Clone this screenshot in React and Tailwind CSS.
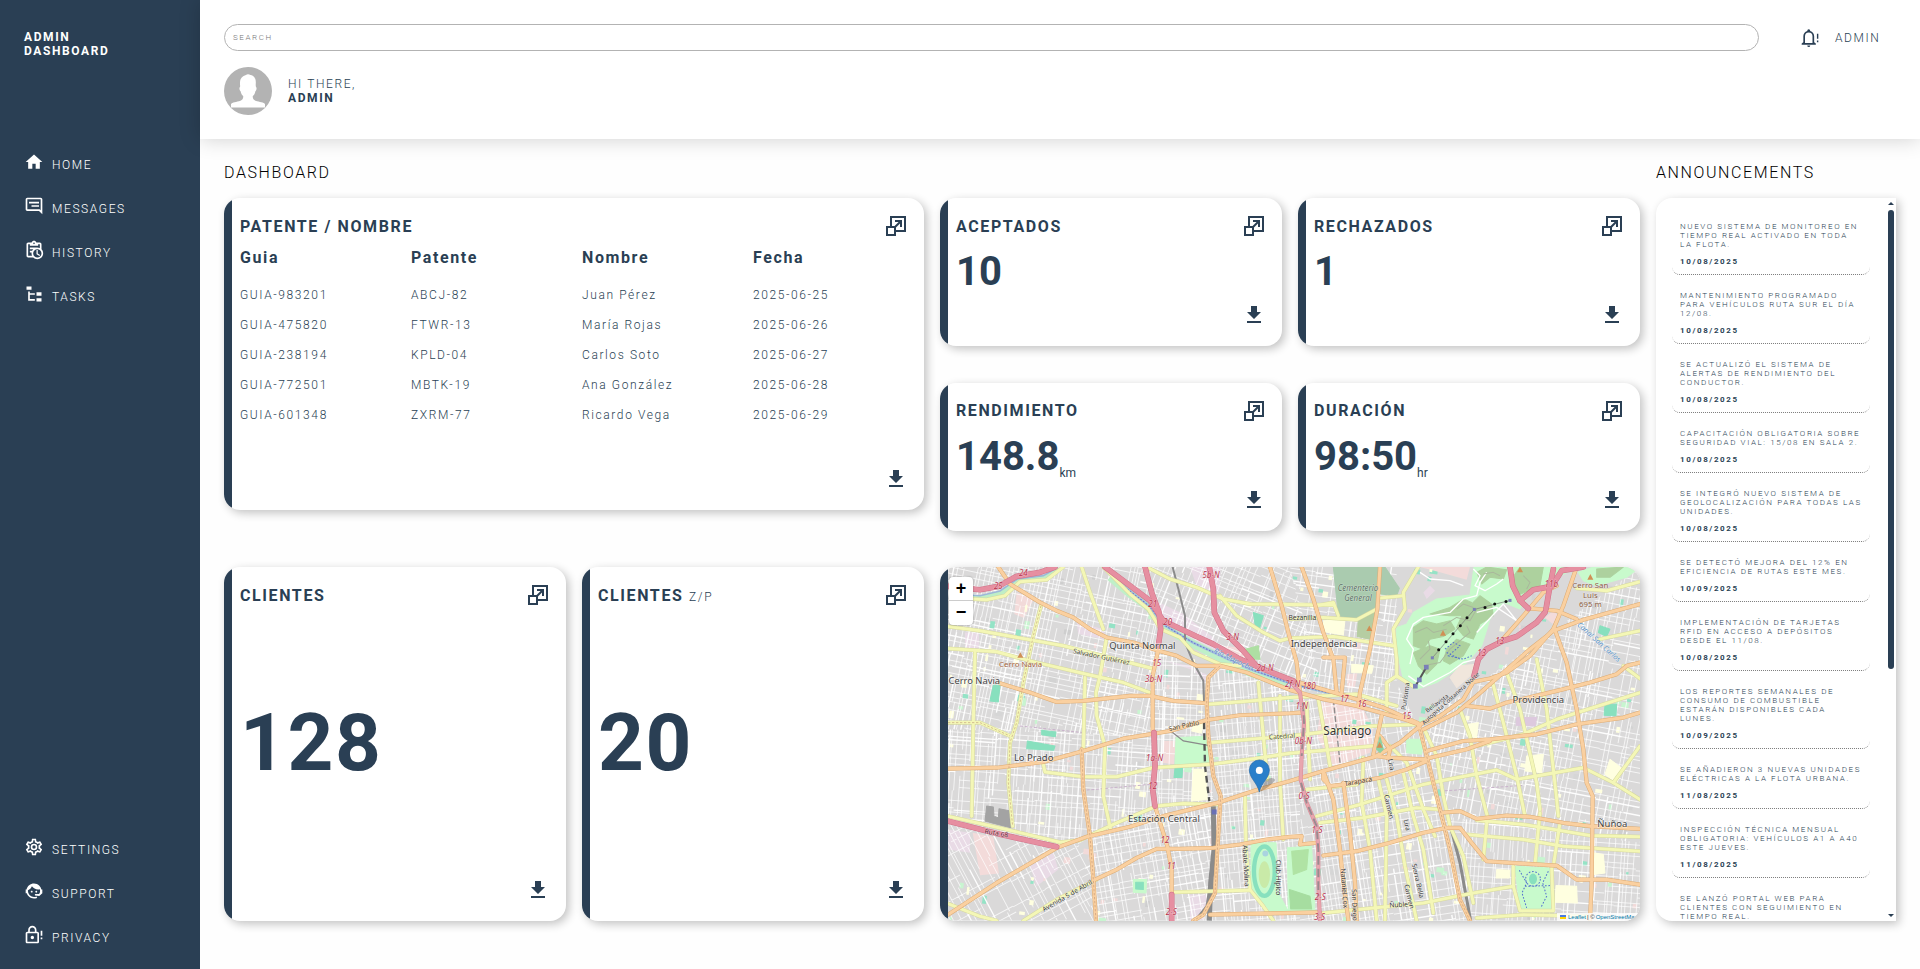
import React from "react";

const P = {
  home: "M10,20V14H14V20H19V12H22L12,3L2,12H5V20H10Z",
  messages:
    "M9 11H18V13H9V11M18 7H6V9H18V7M22 4V22L18 18H4C2.9 18 2 17.11 2 16V4C2 2.9 2.9 2 4 2H20C21.1 2 22 2.9 22 4M20 4H4V16H18.83L20 17.17V4Z",
  history:
    "M21 11.11V5C21 3.9 20.11 3 19 3H14.82C14.4 1.84 13.3 1 12 1S9.6 1.84 9.18 3H5C3.9 3 3 3.9 3 5V19C3 20.11 3.9 21 5 21H11.11C12.37 22.24 14.09 23 16 23C19.87 23 23 19.87 23 16C23 14.09 22.24 12.37 21 11.11M12 3C12.55 3 13 3.45 13 4S12.55 5 12 5 11 4.55 11 4 11.45 3 12 3M5 19V5H7V7H17V5H19V9.68C18.09 9.25 17.08 9 16 9H7V11H11.1C10.5 11.57 10.04 12.25 9.68 13H7V15H9.08C9.03 15.33 9 15.66 9 16C9 17.08 9.25 18.09 9.68 19H5M16 21C13.24 21 11 18.76 11 16S13.24 11 16 11 21 13.24 21 16 18.76 21 16 21M16.5 16.25L19.36 17.94L18.61 19.16L15 17V12H16.5V16.25Z",
  tasks: "M3,3H9V7H3V3M15,10H21V14H15V10M15,17H21V21H15V17M13,13H7V18H13V20H7L5,20V9H7V11H13V13Z",
  settings:
    "M12,8A4,4 0 0,1 16,12A4,4 0 0,1 12,16A4,4 0 0,1 8,12A4,4 0 0,1 12,8M12,10A2,2 0 0,0 10,12A2,2 0 0,0 12,14A2,2 0 0,0 14,12A2,2 0 0,0 12,10M10,22C9.75,22 9.54,21.82 9.5,21.58L9.13,18.93C8.5,18.68 7.96,18.34 7.44,17.94L4.95,18.95C4.73,19.03 4.46,18.95 4.34,18.73L2.34,15.27C2.21,15.05 2.27,14.78 2.46,14.63L4.57,12.97L4.5,12L4.57,11L2.46,9.37C2.27,9.22 2.21,8.95 2.34,8.73L4.34,5.27C4.46,5.05 4.73,4.96 4.95,5.05L7.44,6.05C7.96,5.66 8.5,5.32 9.13,5.07L9.5,2.42C9.54,2.18 9.75,2 10,2H14C14.25,2 14.46,2.18 14.5,2.42L14.87,5.07C15.5,5.32 16.04,5.66 16.56,6.05L19.05,5.05C19.27,4.96 19.54,5.05 19.66,5.27L21.66,8.73C21.79,8.95 21.73,9.22 21.54,9.37L19.43,11L19.5,12L19.43,13L21.54,14.63C21.73,14.78 21.79,15.05 21.66,15.27L19.66,18.73C19.54,18.95 19.27,19.04 19.05,18.95L16.56,17.95C16.04,18.34 15.5,18.68 14.87,18.93L14.5,21.58C14.46,21.82 14.25,22 14,22H10M11.25,4L10.88,6.61C9.68,6.86 8.62,7.5 7.85,8.39L5.44,7.35L4.69,8.65L6.8,10.2C6.4,11.37 6.4,12.64 6.8,13.8L4.68,15.36L5.43,16.66L7.86,15.62C8.63,16.5 9.68,17.14 10.87,17.38L11.24,20H12.76L13.13,17.39C14.32,17.14 15.37,16.5 16.14,15.62L18.57,16.66L19.32,15.36L17.2,13.81C17.6,12.64 17.6,11.37 17.2,10.2L19.31,8.65L18.56,7.35L16.15,8.39C15.38,7.5 14.32,6.86 13.12,6.62L12.75,4H11.25Z",
  support:
    "M18.72,14.76C19.07,13.91 19.26,13 19.26,12C19.26,11.28 19.15,10.59 18.96,9.95C18.31,10.1 17.63,10.18 16.92,10.18C13.86,10.18 11.15,8.67 9.5,6.34C8.61,8.5 6.91,10.26 4.77,11.22C4.73,11.47 4.73,11.74 4.73,12A7.27,7.27 0 0,0 12,19.27C13.05,19.27 14.06,19.04 14.97,18.63C15.54,19.72 15.8,20.26 15.78,20.26C14.14,20.81 12.87,21.08 12,21.08C9.58,21.08 7.27,20.13 5.57,18.42C4.53,17.38 3.76,16.11 3.33,14.73H2V10.18H3.09C3.93,6.04 7.6,2.92 12,2.92C14.4,2.92 16.71,3.87 18.42,5.58C19.69,6.84 20.54,8.45 20.89,10.18H22V14.73H21.94L18.38,18L13.08,17.4V15.73H17.91L18.72,14.76M9.27,11.77C9.9,11.77 10.4,12.28 10.4,12.91C10.4,13.54 9.9,14.04 9.27,14.04C8.64,14.04 8.13,13.54 8.13,12.91C8.13,12.28 8.64,11.77 9.27,11.77M14.72,11.77C15.35,11.77 15.85,12.28 15.85,12.91C15.85,13.54 15.35,14.04 14.72,14.04C14.09,14.04 13.58,13.54 13.58,12.91A1.14,1.14 0 0,1 14.72,11.77Z",
  privacy:
    "M10 17C8.89 17 8 16.1 8 15C8 13.89 8.89 13 10 13C11.11 13 12 13.89 12 15C12 16.11 11.11 17 10 17M16 20V10H4V20H16M16 8C17.11 8 18 8.89 18 10V20C18 21.11 17.11 22 16 22H4C2.89 22 2 21.1 2 20V10C2 8.89 2.89 8 4 8H5V6C5 3.24 7.24 1 10 1C12.76 1 15 3.24 15 6V8H16M10 3C8.34 3 7 4.34 7 6V8H13V6C13 4.34 11.66 3 10 3M22 13H20V7H22V13M22 17H20V15H22V17Z",
  bell: "M22,7V13H20.3V7H22M22,15V17H20.3V15H22M10.5,1.6A1.8,1.8 0 0,0 8.7,3.5C5.9,4.3 4,7 4,10V17L2,18.6V20H19V18.6L17,17V10C17,7 15.1,4.3 12.3,3.5A1.8,1.8 0 0,0 10.5,1.6M10.5,5.4A4.6,4.6 0 0,1 15,10V18H6V10A4.6,4.6 0 0,1 10.5,5.4M8.7,21A1.8,1.8 0 0,0 12.3,21H8.7Z",
  expand:
    "M10.59,12L14.59,8H11V6H18V13H16V9.41L12,13.41V16H20V4H8V12H10.59M22,2V18H12V22H2V12H6V2H22M10,14H4V20H10V14Z",
  download: "M5,20H19V18H5M19,9H15V3H9V9H5L12,16L19,9Z",
};

function Icon({ name, className = "size-6" }) {
  return (
    <svg viewBox="0 0 24 24" fill="currentColor" className={`block shrink-0 ${className}`}>
      <path d={P[name]} />
    </svg>
  );
}

function NavItem({ icon, children }) {
  return (
    <a className="flex h-5 items-center gap-2 text-xs font-light text-white">
      <Icon name={icon} className="size-5" />
      <span className="mt-[5px] leading-[14px]">{children}</span>
    </a>
  );
}

function Card({ title, note, className, children, center }) {
  return (
    <section className={`flex overflow-hidden rounded-2xl bg-white shadow-[3px_3px_10px_rgba(0,0,0,0.24)] ${className}`}>
      <div className="w-2 shrink-0 bg-[#2a3f54]" />
      <div className="flex min-w-0 grow flex-col pt-4 pr-4 pb-[19px] pl-2">
        <header className="flex h-6 items-center justify-between">
          <h3 className="text-base leading-[19px] font-bold">
            {title}
            {note && " "}
            {note && <span className="text-xs font-light">{note}</span>}
          </h3>
          <Icon name="expand" />
        </header>
        <div className={`flex grow flex-col ${center ? "justify-center" : ""}`}>{children}</div>
        <div className="flex justify-end">
          <Icon name="download" />
        </div>
      </div>
    </section>
  );
}

function Stat({ value, unit }) {
  return (
    <p className="mt-2.5 h-[47px] text-[40px] leading-[47px] font-bold tracking-normal">
      {value}
      {unit && <span className="relative top-[7px] text-xs font-normal">{unit}</span>}
    </p>
  );
}

const rows = [
  ["GUIA-983201", "ABCJ-82", "Juan Pérez", "2025-06-25"],
  ["GUIA-475820", "FTWR-13", "María Rojas", "2025-06-26"],
  ["GUIA-238194", "KPLD-04", "Carlos Soto", "2025-06-27"],
  ["GUIA-772501", "MBTK-19", "Ana González", "2025-06-28"],
  ["GUIA-601348", "ZXRM-77", "Ricardo Vega", "2025-06-29"],
];

const news = [
  ["NUEVO SISTEMA DE MONITOREO EN\nTIEMPO REAL ACTIVADO EN TODA\nLA FLOTA.", "10/08/2025"],
  ["MANTENIMIENTO PROGRAMADO\nPARA VEHÍCULOS RUTA SUR EL DÍA\n12/08.", "10/08/2025"],
  ["SE ACTUALIZÓ EL SISTEMA DE\nALERTAS DE RENDIMIENTO DEL\nCONDUCTOR.", "10/08/2025"],
  ["CAPACITACIÓN OBLIGATORIA SOBRE\nSEGURIDAD VIAL: 15/08 EN SALA 2.", "10/08/2025"],
  ["SE INTEGRÓ NUEVO SISTEMA DE\nGEOLOCALIZACIÓN PARA TODAS LAS\nUNIDADES.", "10/08/2025"],
  ["SE DETECTÓ MEJORA DEL 12% EN\nEFICIENCIA DE RUTAS ESTE MES.", "10/09/2025"],
  ["IMPLEMENTACIÓN DE TARJETAS\nRFID EN ACCESO A DEPÓSITOS\nDESDE EL 11/08.", "10/08/2025"],
  ["LOS REPORTES SEMANALES DE\nCONSUMO DE COMBUSTIBLE\nESTARÁN DISPONIBLES CADA\nLUNES.", "10/09/2025"],
  ["SE AÑADIERON 3 NUEVAS UNIDADES\nELÉCTRICAS A LA FLOTA URBANA.", "11/08/2025"],
  ["INSPECCIÓN TÉCNICA MENSUAL\nOBLIGATORIA: VEHÍCULOS A1 A A40\nESTE JUEVES.", "11/08/2025"],
  ["SE LANZÓ PORTAL WEB PARA\nCLIENTES CON SEGUIMIENTO EN\nTIEMPO REAL.", ""],
];

/* ---------- map ---------- */

function rng(seed) {
  let s = seed;
  return () => {
    s = (s * 1664525 + 1013904223) % 4294967296;
    return s / 4294967296;
  };
}

// Each district: outline, street angle in degrees, spacing of the blocks.
const districts = [
  ["54,54 640,54 690,240 690,300 660,560 54,540", 12, 16],
  ["54,540 660,555 690,780 480,870 380,892 54,815", 4, 16],
  ["54,815 380,892 480,870 500,1113 54,1113", -28, 22],
  ["480,870 690,780 870,745 850,1113 500,1113", -10, 15],
  ["660,300 740,315 830,380 835,560 850,750 690,780 660,560", 2, 14],
  ["870,350 1080,425 1110,440 1110,1113 840,1113 870,740 835,560 835,400", -5, 14],
  ["640,54 1080,54 1180,430 1080,420 840,290 690,230", 22, 18],
  ["1080,54 1400,54 1400,400 1460,520 1160,430", 8, 16],
  ["1110,440 1460,525 1620,1113 1110,1113", -9, 17],
  ["1460,525 1650,400 1850,260 2130,54 2130,880 1560,810", 11, 18],
  ["1540,800 2130,880 2130,1113 1620,1113", 4, 18],
];

function streetPath(outline, gap, seed) {
  const pts = outline.split(" ").map((p) => p.split(",").map(Number));
  const xs = pts.map((p) => p[0]);
  const ys = pts.map((p) => p[1]);
  const cx = (Math.min(...xs) + Math.max(...xs)) / 2;
  const cy = (Math.min(...ys) + Math.max(...ys)) / 2;
  const r = Math.hypot(Math.max(...xs) - cx, Math.max(...ys) - cy) + 20;
  const rand = rng(seed);
  let thin = "";
  let wide = "";
  for (let pass = 0; pass < 2; pass++) {
    for (let a = -r; a < r; a += gap * (0.55 + rand() * 0.9) * (pass ? 1.25 : 0.85)) {
      let b = -r;
      while (b < r) {
        const len = 50 + rand() * 200;
        const shift = (rand() - 0.5) * 8;
        if (rand() > 0.18) {
          const m = pass
            ? `M${(cx + b).toFixed(0)} ${(cy + a + shift).toFixed(0)}h${len.toFixed(0)}`
            : `M${(cx + a + shift).toFixed(0)} ${(cy + b).toFixed(0)}v${len.toFixed(0)}`;
          if (rand() > 0.84) wide += m;
          else thin += m;
        }
        b += len;
      }
    }
  }
  return { thin, wide, cx, cy };
}

const patches = (() => {
  const rand = rng(77);
  const tones = ["#ffffe0", "#c8f5d0", "#95e3c6", "#f2dad9", "#d3d3d3", "#cecece", "#ffffe0", "#d6d6d6"];
  return Array.from({ length: 420 }, (_, i) => ({
    x: 54 + rand() * 2060,
    y: 54 + rand() * 1050,
    w: 6 + rand() * (i % 3 ? 18 : 8),
    h: 6 + rand() * (i % 3 ? 18 : 8),
    c: tones[i % tones.length],
  }));
})();

const areas = [
  ["#e9dbe6", "665,150 760,195 850,265 890,330 800,290 700,220"],
  ["#e9dbe6", "780,54 872,54 868,130 800,112"],
  ["#e9dbe6", "700,335 830,375 825,400 780,350"],
  ["#e9dbe6", "440,220 520,240 530,272 445,255"],
  ["#e9dbe6", "105,250 147,250 147,298 105,298"],
  ["#e9dbe6", "54,840 120,850 120,910 54,900"],
  ["#e9dbe6", "780,1035 838,1035 822,1110 780,1113"],
  ["#e9dbe6", "300,950 370,910 385,960 320,1010"],
  ["#f3dbda", "260,130 312,150 282,207 253,195"],
  ["#f3dbda", "128,850 190,862 207,972 150,977"],
  ["#f3dbda", "700,575 737,575 732,645 696,640"],
  ["#f3dbda", "845,780 866,780 866,880 840,900"],
  ["#f3dbda", "880,290 930,295 960,340 890,300"],
  ["#c8facc", "738,565 835,560 838,642 735,645"],
  ["#88e0be", "190,408 210,408 205,458 180,455"],
  ["#88e0be", "335,543 378,548 376,562 335,556"],
  ["#88e0be", "292,575 375,590 371,603 290,598"],
  ["#88e0be", "735,655 758,655 756,684 732,684"],
  ["#c8facc", "610,990 650,990 648,1030 610,1028"],
  ["#88e0be", "617,998 640,998 640,1020 617,1018"],
  ["#88e0be", "970,190 1000,200 988,240 975,225"],
  ["#aedfa3", "945,300 985,290 990,330 960,330"],
  ["#c8facc", "963,880 1038,880 1045,1030 1075,1085 1020,1085 963,1015"],
  ["#ffffe0", "790,660 828,660 832,750 785,755"],
  ["#ffffe0", "790,520 818,522 815,552 785,545"],
  ["#a3a3a3", "170,770 190,773 192,800 205,805 207,778 238,784 242,835 165,815"],
  ["#c8facc", "1072,895 1145,890 1155,1085 1075,1085"],
  ["#b0e3a4", "1085,905 1135,900 1130,960 1090,975"],
  ["#a6dda0", "1078,1020 1140,1040 1145,1078 1082,1078"],
  ["#aacbaf", "1210,54 1348,54 1335,180 1285,212 1225,200"],
  ["#aacbaf", "1352,54 1365,54 1408,118 1400,140 1352,135"],
  ["#b6cda2", "1285,210 1335,190 1328,272 1282,262"],
  ["#f3dbda", "1470,54 1620,54 1610,92 1530,70"],
  ["#f3dbda", "1175,460 1290,460 1330,540 1320,610 1210,650 1160,560"],
  ["#f3dbda", "1250,375 1282,372 1275,415 1252,418"],
  ["#ffffe0", "1180,215 1245,212 1240,258 1182,248"],
  ["#ffffe0", "1265,345 1330,350 1325,372 1265,370"],
  ["#c8facc", "1400,235 1430,225 1450,190 1520,150 1620,138 1632,54 1940,54 1800,130 1770,180 1720,160 1680,210 1655,290 1610,340 1520,400 1460,420 1420,390 1400,300"],
  ["#add19e", "1450,235 1480,215 1520,225 1560,215 1575,240 1540,262 1500,270 1480,300 1450,290"],
  ["#add19e", "1500,195 1560,175 1600,150 1625,160 1600,200 1560,200"],
  ["#add19e", "1600,190 1650,140 1685,165 1690,200 1650,225 1630,270 1600,260 1580,235"],
  ["#add19e", "1450,310 1500,290 1530,300 1520,345 1490,375 1465,350"],
  ["#add19e", "1550,300 1580,270 1620,285 1600,320 1560,345 1540,335"],
  ["#add19e", "1770,54 1840,54 1830,110 1760,140 1745,90"],
  ["#add19e", "1640,70 1670,54 1730,62 1720,90 1680,85 1655,105"],
  ["#c8facc", "1945,70 1990,54 2130,54 2090,85 2000,110 1960,95"],
  ["#add19e", "2000,60 2080,54 2040,85 2000,85"],
  ["#f0e6dc", "1560,385 1590,350 1640,345 1620,380 1580,415"],
  ["#e9dbe6", "1480,130 1500,110 1515,125 1490,150"],
  ["#c8facc", "1430,570 1480,570 1475,615 1430,610"],
  ["#ffffe0", "1615,525 1645,520 1640,565 1610,560"],
  ["#ffffe0", "1790,620 1840,615 1835,670 1785,665"],
  ["#ffffe0", "2040,630 2080,660 2060,700 2025,675"],
  ["#88e0be", "2025,465 2060,465 2058,500 2022,498"],
  ["#88e0be", "2010,230 2040,240 2030,262 2005,250"],
  ["#ddc9de", "1760,505 1820,505 1815,530 1758,528"],
  ["#c8facc", "1755,950 1860,955 1862,1083 1770,1080"],
  ["#ffffe0", "1878,1008 1940,1010 1942,1060 1875,1058"],
  ["#ffffe0", "1990,910 2020,915 2025,970 1992,975"],
  ["#ffffe0", "1700,960 1740,962 1738,985 1698,985"],
  ["#f3dbda", "1845,205 1870,185 1890,205 1868,225"],
];

const yellow = [
  "54,232 150,245 400,290 665,357",
  "54,298 200,308 300,335 470,375 580,400 660,430",
  "455,54 480,130 520,240",
  "530,265 510,380 498,430 500,500 525,590 520,740 542,840",
  "135,310 130,520 125,800",
  "333,170 310,260 280,400 260,520 240,580 235,700 248,830",
  "54,520 150,520 240,560",
  "465,385 460,600",
  "340,645 345,668 460,682 560,682 670,655 840,645 960,630 1080,612 1330,590",
  "835,580 1080,560 1330,530 1470,525",
  "650,54 720,90 800,115 880,150 960,165 1210,168",
  "870,140 920,200 1000,250 1050,275 1080,267 1210,262 1390,290",
  "400,54 350,92 270,98 225,140 170,152 100,148",
  "54,800 230,840 390,878 450,872 560,820 680,770 760,762 870,765",
  "520,54 600,135 655,180 692,240 750,265 790,310 870,345 930,350",
  "835,465 960,455 1080,445 1280,435 1400,470",
  "985,400 1000,560 1012,690",
  "1050,440 1050,700 1060,870",
  "945,740 948,900 960,1020 1000,1070 1030,1113",
  "725,1028 960,1022",
  "54,1062 150,1100 200,1113",
  "280,1113 380,1050 500,990",
  "1465,54 1420,130 1425,180 1390,240 1400,330 1400,380 1450,412",
  "1080,210 1180,205 1280,212 1340,180",
  "1160,170 1210,160 1225,200",
  "1350,147 1420,140",
  "1400,380 1370,400 1370,490",
  "1130,720 1280,705",
  "1160,800 1290,765 1480,705 1530,695 1700,662 1760,690 1960,655",
  "1170,820 1300,805 1460,775 1530,780",
  "1300,625 1295,760 1320,900 1340,1113",
  "1345,690 1370,800 1365,1113",
  "1370,690 1400,800 1425,950 1460,1113",
  "1420,670 1450,800 1480,900 1510,1090",
  "1380,590 1430,640 1480,780 1515,860",
  "1485,545 1520,620 1540,740 1560,830 1600,920 1630,1060",
  "1590,480 1620,560 1640,680 1672,800 1660,930",
  "1685,390 1720,520 1760,680 1785,800",
  "1730,370 1770,480 1820,700 1830,780",
  "1820,330 1850,480 1880,750 1885,800",
  "1640,590 1780,555 1880,510 2130,430",
  "2010,270 2130,245",
  "1940,118 2030,125 2130,98",
  "2080,350 2130,388",
  "1960,655 2050,700 2130,750",
  "2050,700 2130,590",
  "1640,812 1780,825 1980,858 2130,862",
  "1610,855 1780,870 1900,890 2130,905",
  "1830,790 1815,942",
  "1890,820 1870,950",
  "1750,950 1750,1010 1770,1083 1870,1083 1865,955",
  "1180,1090 1480,1060 1630,1030 1750,1010",
  "1640,1105 1780,1095 1980,1100",
  "1165,450 1185,560 1200,650",
  "1130,460 1140,690",
];

const orange = [
  "205,54 240,105 330,160 380,185 430,205 480,240 530,265 610,280 685,305 740,320 800,350 870,350 950,370 1080,422 1180,450 1280,470 1430,512 1465,525",
  "210,402 300,430 380,458 460,455 600,440 660,440 730,455 830,462",
  "54,658 200,655 340,638 460,605 580,568 720,545 830,512 930,498 1080,492 1110,490",
  "685,300 668,380 668,550",
  "675,770 712,890 725,960 725,1040",
  "54,1095 200,1000 380,895 470,862 600,832 700,800 870,758 980,722 1080,695 1180,665 1335,622 1410,580 1470,530",
  "495,990 560,960 620,925 680,898 750,898 850,895 930,885 1010,870 1080,862 1115,860 1110,885 1155,880",
  "455,600 460,720 480,860 490,990 498,1113",
  "870,350 835,385 830,460 835,560 850,680 872,740 862,900 855,1030 820,1095 790,1113",
  "1020,54 1055,170 1075,250 1100,340 1110,430",
  "1115,54 1150,150 1180,250 1210,330 1220,430",
  "1350,54 1342,180 1320,300 1290,430 1285,470",
  "1080,392 1230,435 1360,475 1465,522",
  "1465,527 1530,500 1600,450 1630,398 1680,388 1730,370 1800,320 1870,240 1900,170 1940,54",
  "1480,540 1580,490 1640,440 1720,370 1800,300 1870,245 1960,212 2130,165",
  "1330,615 1342,560 1355,500",
  "1350,560 1380,600 1375,625 1335,620",
  "1800,178 1880,185 1940,210",
  "1872,235 1910,340 1940,480 1960,600 1970,700 1988,740 1985,1000 1980,1113",
  "1610,470 1680,478 1730,460 1880,425 1980,400 2060,375 2090,350 2130,340",
  "1490,605 1600,575 1680,570 1820,555 1940,525 2080,505 2130,490",
  "1370,625 1480,630 1500,625 1610,600 1680,575",
  "1240,705 1350,685 1430,660 1490,635",
  "1470,540 1490,620 1520,740 1535,800 1560,900 1590,1050 1620,1113",
  "1535,790 1590,785 1640,808 1730,798 1800,802 1900,820 1980,830 2130,838",
  "1180,918 1280,905 1380,880 1480,850 1550,835 1590,835 1625,880 1670,935 1780,942 1880,948 1940,990 2030,990 2130,1005",
  "1180,665 1210,750 1230,900 1235,950 1255,1113",
  "1240,700 1260,850 1275,1000 1280,1113",
  "1180,665 1180,690 1200,710 1245,705",
  "1710,280 1780,200 1840,130 1880,110",
  "1180,325 1245,325 1235,430",
  "840,1095 1170,1088",
];

const pink = [
  "54,112 150,122 205,112 260,82 330,70 375,54",
  "525,54 600,110 660,155 700,215 800,262 850,285 930,330 1000,360 1090,395",
  "645,54 665,130 687,190 692,240 685,290",
  "838,54 850,120 853,190 880,245 935,300 975,345",
  "54,815 200,852 380,892",
  "672,550 675,650 668,720 675,770",
  "725,1035 725,1113",
  "1740,54 1748,110 1770,155 1795,178",
  "1770,155 1810,122 1865,112 1895,65 1960,54",
  "1848,180 1860,110 1870,60",
  "1845,190 1820,220 1760,262 1720,275 1670,300 1645,330 1632,380",
];

const northSouth = ["1088,405 1110,430 1122,520 1115,620 1112,690 1130,760 1160,830 1165,900 1165,1000 1170,1113"];

function Roads({ list, color, casing, width }) {
  return (
    <g fill="none" strokeLinejoin="round" strokeLinecap="round">
      <g stroke={casing} strokeWidth={width + 3}>
        {list.map((p) => (
          <polyline key={p} points={p} />
        ))}
      </g>
      <g stroke={color} strokeWidth={width}>
        {list.map((p) => (
          <polyline key={p} points={p} />
        ))}
      </g>
    </g>
  );
}

// text, x, y, size, colour, rotation, italic
const labels = [
  ["Quinta Normal", 637, 300, 28.5, "#444", 0],
  ["Cerro Navia", 133, 404, 28, "#444", 0],
  ["Lo Prado", 311, 635, 28.5, "#444", 0],
  ["Estación Central", 702, 819, 28.5, "#444", 0],
  ["Independencia", 1182, 294, 28.5, "#444", 0],
  ["Santiago", 1252, 557, 35, "#333", 0],
  ["Providencia", 1825, 461, 28.5, "#444", 0],
  ["Ñuñoa", 2047, 832, 28.5, "#444", 0],
  ["Cerro Navia", 272, 352, 23.5, "#a0613a", 0],
  ["Cerro San", 1981, 118, 23.5, "#8a5a40", 0],
  ["Luis", 1981, 147, 23.5, "#8a5a40", 0],
  ["695 m", 1981, 175, 23.5, "#8a5a40", 0],
  ["Cementerio", 1284, 126, 24, "#5c7264", 0, 1],
  ["General", 1284, 155, 24, "#5c7264", 0, 1],
  ["Bezanilla", 1117, 214, 20, "#333", 0],
  ["Salvador Gutiérrez", 514, 330, 20, "#4a4a30", 12],
  ["San Pablo", 762, 536, 20, "#4a3a20", -12],
  ["Catedral", 1056, 568, 20, "#4a4a30", -4],
  ["Ruta 68", 199, 858, 20, "#5a1830", 10],
  ["Avenida 5 de Abril", 412, 1045, 20, "#333", -30],
  ["Abate Molina", 947, 955, 20, "#333", 87],
  ["Club Hípico", 1044, 990, 20, "#333", 90],
  ["Purísima", 1427, 447, 20, "#444", -82],
  ["Bellavista", 1521, 468, 18, "#333", -36],
  ["Autopista Costanera Norte", 1562, 454, 18, "#333", -42],
  ["Tarapacá", 1285, 703, 20, "#4a3a20", -10],
  ["Lira", 1383, 652, 20, "#333", 80],
  ["Carmen", 1376, 778, 20, "#333", 77],
  ["Lira", 1430, 833, 20, "#333", 77],
  ["Sierra Bella", 1463, 1000, 20, "#333", 77],
  ["Carmen", 1437, 1047, 20, "#333", 77],
  ["Nataniel Cox", 1242, 1022, 20, "#333", 86],
  ["San Diego", 1273, 1072, 20, "#333", 88],
  ["Ñuble", 1406, 1072, 20, "#333", -3],
  ["Río Mapocho", 910, 338, 22, "#5a87c6", 26, 1],
  ["Canal San Carlos", 2006, 286, 22, "#5a93c8", 42, 1],
  ...[
    ["24", 280, 80], ["25", 205, 121], ["5b-N", 843, 88], ["21", 668, 175], ["20", 713, 227],
    ["15", 680, 350], ["3-N", 908, 274], ["3b-N", 671, 397], ["2d-N", 1005, 366], ["1a-N", 674, 636],
    ["12", 668, 718], ["12", 705, 879], ["11", 724, 957], ["2-S", 724, 1095], ["2f-N", 1088, 412],
    ["180", 1137, 418], ["17", 1243, 459], ["16", 1296, 473], ["15", 1430, 510], ["1-N", 1115, 478],
    ["0b-N", 1120, 583], ["0-S", 1122, 750], ["1-S", 1161, 851], ["2-S", 1171, 1050], ["3-S", 1169, 1110],
    ["13", 1709, 286], ["13", 1655, 321], ["11b", 1864, 113],
  ].map(([t, x, y]) => [t, x, y, 24, "#b9304a", 0, 1]),
];

const cable = [[1665, 175], [1694, 165], [1728, 157], [1611, 206], [1591, 230], [1569, 254], [1548, 278], [1526, 302]];
const stations = [[1633, 181, 9], [1507, 326, 9], [1740, 154, 9], [1489, 354, 14], [1468, 392, 14], [1456, 411, 14]];
const peaks = [[271, 318], [1318, 238], [1539, 252], [1349, 587], [1770, 62], [1981, 84]];

function Patches({ items }) {
  return items.map((p, i) => (
    <rect key={i} x={p.x} y={p.y} width={p.w} height={p.h} fill={p.c} transform={`rotate(8 ${p.x} ${p.y})`} />
  ));
}

function CityMap() {
  return (
    <svg viewBox="54 54 2076 1059" preserveAspectRatio="none" className="block h-full w-full">
      <defs>
        {districts.map(([pts], i) => (
          <clipPath key={i} id={`district-${i}`}>
            <polygon points={pts} />
          </clipPath>
        ))}
      </defs>
      <rect x="54" y="54" width="2076" height="1059" fill="#dad9d9" />
      <Patches items={patches.slice(0, 280)} />
      {areas
        .filter(([c]) => c === "#f3dbda" || c === "#e9dbe6")
        .map(([c, p]) => (
          <polygon key={p} points={p} fill={c} />
        ))}
      {districts.map(([pts, angle, gap], i) => {
        const s = streetPath(pts, gap, 11 + i * 31);
        return (
          <g key={i} clipPath={`url(#district-${i})`}>
            <g transform={`rotate(${angle} ${s.cx} ${s.cy})`} stroke="#fff" fill="none">
              <path d={s.thin} strokeWidth="2.7" strokeOpacity="0.75" />
              <path d={s.wide} strokeWidth="4.2" strokeOpacity="0.95" />
            </g>
          </g>
        );
      })}
      <Patches items={patches.slice(280).filter((p) => p.c[1] !== "d" && p.c !== "#cecece")} />
      {areas
        .filter(([c]) => c !== "#f3dbda" && c !== "#e9dbe6")
        .map(([c, p]) => (
          <polygon key={p} points={p} fill={c} strokeLinejoin="round" stroke={c} strokeWidth="3" />
        ))}

      {/* river valley */}
      <g fill="none">
        <path d="M60 142L150 148 215 132 265 94 345 86 385 58" stroke="#bfeec6" strokeWidth="14" />
        <path d="M60 134L150 140 210 126 262 90 340 80 375 60" stroke="#9db8d8" strokeWidth="5" />
        <path d="M540 84L600 134 655 174 705 236 780 279 860 320 960 370 1070 408" stroke="#bff0c8" strokeWidth="24" />
        <path d="M545 82L600 126 655 169 705 229 790 281 860 314 950 356 1080 402 1230 440" stroke="#a3c3dc" strokeWidth="8" />
        <path d="M545 82L600 126 655 169 705 229 790 281 860 314 950 356 1080 402 1230 440" stroke="#6a6fd0" strokeWidth="3" strokeDasharray="5 5" />
      </g>

      {/* park trails */}
      <g fill="none" stroke="#fff" strokeWidth="4" strokeLinejoin="round">
        <path d="M1440 345L1450 300 1430 270 1450 225 1480 205 1560 190 1600 150 1640 140 1650 100 1670 70" />
        <path d="M1435 380L1480 412 1560 370 1600 340 1640 330" />
        <path d="M1630 60L1650 80 1635 110 1665 125 1700 105 1720 90" />
        <path d="M1640 190L1700 175 1760 215 1720 165 1640 250" />
        <path d="M1470 70L1500 90 1560 95 1600 110" />
      </g>
      <g fill="none" stroke="#a9b89c" strokeWidth="3" strokeLinejoin="round">
        <path d="M1540 230L1580 205 1620 215 1640 180M1480 350L1530 340 1560 300 1620 250 1610 230" />
        <path d="M1455 250L1490 235 1510 250 1550 240M1470 330L1500 300 1495 275M1580 180L1600 165 1630 175" />
        <path d="M1780 80L1800 100 1790 120M1660 75L1690 70 1710 80" />
      </g>
      <g fill="none" stroke="#5470cf" strokeWidth="3" strokeDasharray="5 5">
        <path d="M1545 300L1570 280 1590 290 1555 320 1600 330 1625 320M1550 310L1590 330" />
        <path d="M1768 962L1790 1000 1776 1030 1790 1075M1855 965L1838 1000 1850 1040 1832 1075M1785 1010L1860 1008" />
        <circle cx="1809" cy="988" r="22" />
      </g>

      {/* rail */}
      <g fill="none" stroke="#8b8b8b">
        <path d="M728 54L745 120 765 200 765 280 790 340 820 395 822 455" strokeWidth="6" />
        <path d="M722 545L760 575 835 588" strokeWidth="4" />
        <path d="M822 520L825 650 838 755" stroke="#555" strokeWidth="7" strokeDasharray="20 12" />
        <path d="M850 770L852 900 842 1000 838 1113" strokeWidth="15" />
        <path d="M848 960L830 1070 795 1113" strokeWidth="7" />
        <path d="M1210 450L1230 640" strokeWidth="4" strokeDasharray="18 7" />
        <path d="M1565 845L1590 940 1622 1113" strokeWidth="9" />
        <path d="M240 722L240 765" strokeWidth="7" />
        <path d="M270 530L460 550M470 722L660 705M1530 725L1780 708" stroke="#c9b2cb" strokeWidth="3" strokeDasharray="9 5" />
      </g>

      <Roads list={yellow} color="#f4f7b6" casing="#d6d8a0" width={9} />
      <Roads list={orange} color="#fad0a0" casing="#dcab74" width={9.5} />
      <Roads list={northSouth} color="#e8a5ae" casing="#d98a96" width={9} />
      <Roads list={pink} color="#e68fa1" casing="#cf7288" width={14} />
      <g fill="none" stroke="#b78a6a" strokeWidth="2" strokeDasharray="7 5" opacity="0.75">
        <polyline points={orange[7]} />
        <polyline points={orange[8]} />
        <polyline points={orange[23]} />
        <polyline points={yellow[5]} />
        <polyline points={yellow[6]} />
      </g>
      <path d="M1119 460L1122 520 1115 620M1113 700L1130 760 1160 830 1165 900 1165 1040" fill="none" stroke="#9a8a90" strokeWidth="6" strokeDasharray="26 12" />

      {/* racecourse */}
      <g fill="none">
        <ellipse cx="1003" cy="965" rx="31" ry="74" stroke="#88e0be" strokeWidth="13" fill="#c8facc" />
        <ellipse cx="1003" cy="975" rx="17" ry="40" fill="#c9eaa8" />
        <circle cx="1006" cy="912" r="9" fill="#aad3df" />
      </g>
      <ellipse cx="1809" cy="988" rx="12" ry="16" fill="#88e0be" />
      <path d="M1350 558L1362 600 1350 612 1338 600Z" fill="#8ed1a4" />

      {/* cable car */}
      <path d="M1740 154L1633 181 1507 326" fill="none" stroke="#777" strokeWidth="2" />
      <path d="M1489 354L1456 411" fill="none" stroke="#555" strokeWidth="6" />
      {cable.map(([x, y]) => (
        <circle key={x} cx={x} cy={y} r="4.5" fill="#111" />
      ))}
      {stations.map(([x, y, s]) => (
        <rect key={x} x={x - s / 2} y={y - s / 2} width={s} height={s} fill="#7a7fb8" />
      ))}
      <rect x="845" y="780" width="15" height="15" fill="#6a70b5" />
      {peaks.map(([x, y]) => (
        <path key={x} d={`M${x - 9} ${y + 8}h18l-9 -17z`} fill="#d08f55" />
      ))}

      <g textAnchor="middle" className="font-['Noto_Sans',sans-serif] tracking-normal">
        {labels.map(([t, x, y, size, fill, rot, it], i) => (
          <text
            key={i}
            x={x}
            y={y}
            fontSize={size}
            fill={fill}
            fontStyle={it ? "italic" : "normal"}
            stroke="#fff"
            strokeOpacity="0.55"
            strokeWidth={size > 26 ? 4 : 2}
            paintOrder="stroke"
            transform={rot ? `rotate(${rot} ${x} ${y - 6})` : undefined}
          >
            {t}
          </text>
        ))}
      </g>

      {/* marker */}
      <path d="M990 728Q1020 712 1036 692Q1030 680 1008 690Z" fill="#000" opacity="0.22" />
      <path d="M988 728C982 700 958 686 958 662A30 30 0 0 1 1018 662C1018 686 994 700 988 728Z" fill="#2a7fca" stroke="#2268a8" strokeWidth="2" />
      <circle cx="988" cy="663" r="10.5" fill="#fff" />
    </svg>
  );
}

function MapCard() {
  return (
    <section className="flex h-[353.67px] w-[700px] overflow-hidden rounded-2xl bg-white shadow-[3px_3px_10px_rgba(0,0,0,0.24)]">
      <div className="w-2 shrink-0 bg-[#2a3f54]" />
      <div className="relative grow overflow-hidden">
        <CityMap />
        <div className="absolute top-[9.5px] left-px w-6 overflow-hidden rounded-sm bg-white text-center font-['Liberation_Sans',sans-serif] text-lg font-bold tracking-normal text-black shadow-[0_0_2px_rgba(0,0,0,0.4)]">
          <div className="h-6 border-b border-[#ccc] leading-[23px]">+</div>
          <div className="h-6 leading-[23px]">−</div>
        </div>
        <div className="absolute right-0 bottom-0 flex h-2 w-[83px] items-center overflow-hidden bg-white/80 pl-[3px] font-['Liberation_Sans',sans-serif] text-[6px] leading-[8px] tracking-normal whitespace-nowrap text-[#333]">
          <svg viewBox="0 0 12 8" className="mr-0.5 h-1 w-1.5 shrink-0">
            <path fill="#4c7be1" d="M0 0h12v4H0z" />
            <path fill="#ffd500" d="M0 4h12v4H0z" />
          </svg>
          <span className="text-[#0078a8]">Leaflet</span>
          <span className="mx-px">| ©</span>
          <span className="text-[#0078a8]">OpenStreetMap</span>
        </div>
      </div>
    </section>
  );
}

function Avatar() {
  return (
    <svg viewBox="0 0 48 48" className="size-12 shrink-0">
      <circle cx="24" cy="24" r="24" fill="#b3b3b3" />
      <path
        fill="#fff"
        d="M22 8C23 6.800 25 6.900 26.500 8C30 8.600 32 11.500 31.800 16C31.700 17.500 31.600 19 32 20C33 20.500 32.600 23.500 31.400 24.200C31 26.500 30 28 28.800 29C28.500 31.500 29.500 33 31.500 33.800C35.500 35.200 40 35.300 41 37V40.500H7V37C8 35.300 12.500 35.200 16.500 33.800C18.500 33 19.500 31.500 19.200 29C18 28 17 26.500 16.600 24.200C15.400 23.500 15 20.500 16 20C16.400 19 15.800 17.500 16 15.500C16.200 11 18.500 9 22 8Z"
      />
    </svg>
  );
}

export default function App() {
  return (
    <div className="flex h-[969px] w-full overflow-hidden bg-[#fefefe] font-[Roboto,sans-serif] tracking-[1.6px] text-[#2a3f54]">
      <aside className="flex w-[200px] shrink-0 flex-col bg-[#2a3f54] px-6">
        <h1 className="mt-[30px] text-xs leading-[14px] font-bold text-white">
          ADMIN
          <br />
          DASHBOARD
        </h1>
        <nav className="mt-[94px] flex flex-col gap-6">
          <NavItem icon="home">HOME</NavItem>
          <NavItem icon="messages">MESSAGES</NavItem>
          <NavItem icon="history">HISTORY</NavItem>
          <NavItem icon="tasks">TASKS</NavItem>
        </nav>
        <nav className="mt-auto mb-6 flex flex-col gap-6">
          <NavItem icon="settings">SETTINGS</NavItem>
          <NavItem icon="support">SUPPORT</NavItem>
          <NavItem icon="privacy">PRIVACY</NavItem>
        </nav>
      </aside>

      <div className="flex min-w-0 grow flex-col">
        <header className="z-10 flex h-[139px] shrink-0 flex-col gap-4 bg-white p-6 shadow-[0_0_20px_rgba(0,0,0,0.19)]">
          <div className="flex h-[27px] items-center">
            <div className="flex h-[27px] w-[1535px] items-center rounded-full border border-[#b3b3b3] pl-2 text-[8px] font-light text-[#757575]">
              SEARCH
            </div>
            <Icon name="bell" className="ml-[41px] size-5" />
            <span className="ml-[15px] text-xs font-light">ADMIN</span>
          </div>
          <div className="flex items-center gap-4">
            <Avatar />
            <p className="text-xs leading-[14px] font-light">
              HI THERE,
              <br />
              <b className="font-bold">ADMIN</b>
            </p>
          </div>
        </header>

        <main className="flex gap-4 px-6 pt-6">
          <div className="flex flex-col gap-4">
            <h2 className="h-[19px] text-base leading-[19px] font-light text-black">DASHBOARD</h2>
            <div className="flex flex-col gap-[36.66px]">
              <div className="flex gap-4">
                <Card title="PATENTE / NOMBRE" className="h-[312px] w-[700px]">
                  <div className="grid h-[39px] w-[684px] grid-cols-4 items-center pt-px text-base font-bold">
                    <span>Guia</span>
                    <span>Patente</span>
                    <span>Nombre</span>
                    <span>Fecha</span>
                  </div>
                  <div className="mt-[3px]">
                    {rows.map((r) => (
                      <div key={r[0]} className="grid h-[30px] w-[684px] grid-cols-4 items-center text-xs font-light">
                        {r.map((c) => (
                          <span key={c}>{c}</span>
                        ))}
                      </div>
                    ))}
                  </div>
                </Card>
                <div className="grid grid-cols-2 gap-x-4 gap-y-[36.66px]">
                  <Card title="ACEPTADOS" className="h-[148px] w-[342px]">
                    <Stat value="10" />
                  </Card>
                  <Card title="RECHAZADOS" className="h-[148px] w-[342px]">
                    <Stat value="1" />
                  </Card>
                  <Card title="RENDIMIENTO" className="h-[148px] w-[342px]">
                    <Stat value="148.8" unit="km" />
                  </Card>
                  <Card title="DURACIÓN" className="h-[148px] w-[342px]">
                    <Stat value="98:50" unit="hr" />
                  </Card>
                </div>
              </div>
              <div className="flex gap-4">
                <Card title="CLIENTES" className="h-[353.67px] w-[342px]" center>
                  <p className="text-[80px] leading-[94px] font-bold">128</p>
                </Card>
                <Card title="CLIENTES" note="Z/P" className="h-[353.67px] w-[342px]" center>
                  <p className="text-[80px] leading-[94px] font-bold">20</p>
                </Card>
                <MapCard />
              </div>
            </div>
          </div>

          <div className="flex w-[240px] shrink-0 flex-col gap-4">
            <h2 className="h-[19px] text-base leading-[19px] font-light text-black">ANNOUNCEMENTS</h2>
            <section className="flex h-[723px] justify-between overflow-hidden rounded-l-2xl bg-white shadow-[3px_3px_10px_rgba(0,0,0,0.24)]">
              <ul className="flex w-[214px] flex-col gap-2 overflow-hidden pt-4 pl-4">
                {news.map(([text, date]) => (
                  <li key={text} className="flex shrink-0 flex-col gap-2 rounded-lg border-b border-dotted border-[#808080] p-2 text-[8px] leading-[9px]">
                    <p className="font-light whitespace-pre">{text}</p>
                    <b className="font-bold">{date}</b>
                  </li>
                ))}
              </ul>
              <div className="flex w-2 flex-col items-start pt-1 pb-1 text-[#2a3f54]">
                <svg viewBox="0 0 6 3" className="h-[3px] w-1.5">
                  <path d="M0 3L3 0 6 3Z" fill="currentColor" />
                </svg>
                <div className="mt-[5px] h-[459px] w-1.5 rounded-full bg-[#2a3f54]" />
                <svg viewBox="0 0 6 3" className="mt-auto h-[3px] w-1.5">
                  <path d="M0 0L3 3 6 0Z" fill="currentColor" />
                </svg>
              </div>
            </section>
          </div>
        </main>
      </div>
    </div>
  );
}
